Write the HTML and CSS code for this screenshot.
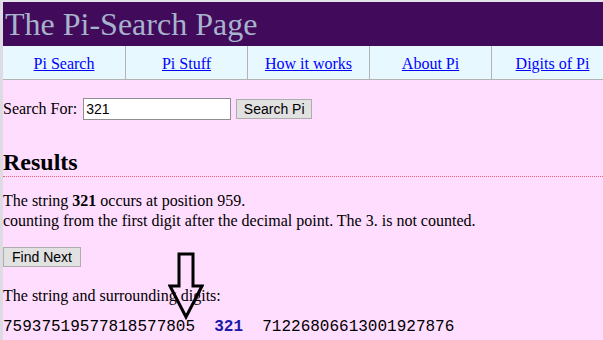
FILE: index.html
```html
<!DOCTYPE html>
<html lang="en">
<head>
    <meta charset="UTF-8">
    <title>The Pi-Search Page</title>
    <link rel="stylesheet" href="styles.css">
</head>
<body>

    <div class="page">
        <h1 class="title">The Pi-Search Page</h1>

        <div class="nav">
            <div class="nav-cell"><a href="#">Pi Search</a></div>
            <div class="nav-cell"><a href="#">Pi Stuff</a></div>
            <div class="nav-cell"><a href="#">How it works</a></div>
            <div class="nav-cell"><a href="#">About Pi</a></div>
            <div class="nav-cell"><a href="#">Digits of Pi</a></div>
        </div>

        <form class="search-row">
            <label for="query">Search For:</label>
            <input type="text" id="query" value="321">
            <button type="button" class="btn">Search Pi</button>
        </form>

        <h2 class="results-head">Results</h2>

        <p class="found">The string <b>321</b> occurs at position 959.<br>
        counting from the first digit after the decimal point. The 3. is not counted.</p>

        <button type="button" class="btn next-btn">Find Next</button>

        <p class="surround">The string and surrounding digits:</p>

        <pre class="digits">75937519577818577805  <b class="hit">321</b>  71226806613001927876</pre>

        <svg class="arrow" width="36" height="68" viewBox="0 0 36 68">
            <path d="M11 2 H25 V34 H34 L18 65 L2 34 H11 Z" fill="none" stroke="#000" stroke-width="3" stroke-linejoin="miter"/>
        </svg>
    </div>

</body>
</html>
```

FILE: styles.css
```css
* {
    box-sizing: border-box;
}

html {
    background: #ffddff;
}

body {
    margin: 0;
    font-family: "Liberation Serif", "Times New Roman", serif;
    font-size: 16px;
    color: #000;
}

.page {
    position: relative;
    min-height: 340px;
    border-top: 2px solid #e4e4ea;
    border-left: 3px solid #dcdce2;
}

.title {
    margin: 0;
    height: 44px;
    padding-left: 2px;
    background: #410a5a;
    color: #a7b3cc;
    font-size: 32px;
    font-weight: normal;
    line-height: 44px;
}

.nav {
    display: grid;
    grid-template-columns: repeat(5, 122px);
    height: 34px;
    background: #e8f8ff;
    border-bottom: 1px solid #b4b4b4;
}

.nav-cell {
    display: flex;
    align-items: center;
    justify-content: center;
    border-left: 1px solid #b4b4b4;
    padding-top: 2px;
}

.nav-cell:first-child {
    border-left: none;
}

.nav-cell a {
    color: #0000ff;
}

.search-row {
    display: flex;
    align-items: center;
    gap: 5px;
    margin: 17px 0 0;
    height: 23px;
}

.search-row label {
    margin-right: 1px;
}

#query {
    width: 148px;
    height: 22px;
    padding: 1px 2px;
    border: 1px solid #8f8f8f;
    font-family: "Liberation Sans", Arial, sans-serif;
    font-size: 14px;
    background: #fff;
}

.btn {
    height: 20px;
    padding: 0 7px;
    border: 1px solid #adadad;
    background: #e1e1e1;
    font-family: "Liberation Sans", Arial, sans-serif;
    font-size: 14px;
    color: #000;
    white-space: nowrap;
}

.search-row .btn {
    width: 76px;
    padding: 0;
}

.results-head {
    margin: 28px 0 0;
    padding-bottom: 0;
    font-size: 24px;
    line-height: 28px;
    border-bottom: 1px dotted #f0607a;
}

.found {
    margin: 14px 0 0;
    line-height: 20px;
}

.next-btn {
    display: block;
    margin-top: 16px;
    width: 78px;
}

.surround {
    margin: 19px 0 0;
    line-height: 20px;
}

.digits {
    margin: 11px 0 0;
    font-family: "Liberation Mono", "Courier New", monospace;
    font-size: 16px;
    line-height: 20px;
}

.hit {
    color: #1a1aa8;
}

.arrow {
    position: absolute;
    left: 165px;
    top: 250px;
}
```
